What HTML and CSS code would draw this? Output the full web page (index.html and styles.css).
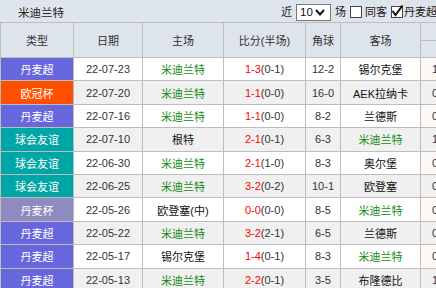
FILE: index.html
```html
<!DOCTYPE html>
<html lang="zh">
<head>
<meta charset="utf-8">
<link rel="stylesheet" href="styles.css">
</head>
<body>
<div class="page">
  <div class="titlebar">
    <div class="title">米迪兰特</div>
    <div class="controls">
      <span class="lbl">近</span>
      <span class="select"><span class="val">10</span><svg class="chev" width="10" height="7" viewBox="0 0 10 7"><polyline points="1,1 5,5.5 9,1" fill="none" stroke="#111" stroke-width="2"/></svg></span>
      <span class="lbl">场</span>
      <span class="cb"></span>
      <span class="lbl t1">同客</span>
      <span class="cb on"><svg width="13" height="13" viewBox="0 0 13 13"><polyline points="1.5,6 4.5,10 11.5,0.5" fill="none" stroke="#111" stroke-width="2"/></svg></span>
      <span class="lbl t2">丹麦超</span>
      <span class="cb on"><svg width="13" height="13" viewBox="0 0 13 13"><polyline points="1.5,6 4.5,10 11.5,0.5" fill="none" stroke="#111" stroke-width="2"/></svg></span>
    </div>
  </div>
  <table class="grid">
    <colgroup>
      <col class="c-type"><col class="c-date"><col class="c-home"><col class="c-score"><col class="c-corner"><col class="c-away"><col class="c-extra">
    </colgroup>
    <thead>
      <tr class="h1">
        <th rowspan="2">类型</th>
        <th rowspan="2">日期</th>
        <th rowspan="2">主场</th>
        <th rowspan="2">比分(半场)</th>
        <th rowspan="2">角球</th>
        <th rowspan="2">客场</th>
        <th class="ex"></th>
      </tr>
      <tr class="h2"><th class="ex"></th></tr>
    </thead>
    <tbody>
      <tr class="w"><td class="t dk">丹麦超</td><td>22-07-23</td><td class="g">米迪兰特</td><td><span class="r">1-3</span>(0-1)</td><td>12-2</td><td class="k">锡尔克堡</td><td class="ex">1</td></tr>
      <tr class="s"><td class="t uc">欧冠杯</td><td>22-07-20</td><td class="g">米迪兰特</td><td><span class="r">1-1</span>(0-0)</td><td>16-0</td><td class="k">AEK拉纳卡</td><td class="ex">0</td></tr>
      <tr class="w"><td class="t dk">丹麦超</td><td>22-07-16</td><td class="g">米迪兰特</td><td><span class="r">1-1</span>(0-0)</td><td>8-2</td><td class="k">兰德斯</td><td class="ex">0</td></tr>
      <tr class="s"><td class="t fr">球会友谊</td><td>22-07-10</td><td class="k">根特</td><td><span class="r">2-1</span>(0-1)</td><td>6-3</td><td class="g">米迪兰特</td><td class="ex">1</td></tr>
      <tr class="w"><td class="t fr">球会友谊</td><td>22-06-30</td><td class="g">米迪兰特</td><td><span class="r">2-1</span>(1-0)</td><td>8-3</td><td class="k">奥尔堡</td><td class="ex">0</td></tr>
      <tr class="s"><td class="t fr">球会友谊</td><td>22-06-25</td><td class="g">米迪兰特</td><td><span class="r">3-2</span>(0-2)</td><td>10-1</td><td class="k">欧登塞</td><td class="ex">0</td></tr>
      <tr class="w"><td class="t cup">丹麦杯</td><td>22-05-26</td><td class="k">欧登塞(中)</td><td><span class="r">0-0</span>(0-0)</td><td>8-5</td><td class="g">米迪兰特</td><td class="ex">0</td></tr>
      <tr class="s"><td class="t dk">丹麦超</td><td>22-05-22</td><td class="g">米迪兰特</td><td><span class="r">3-2</span>(2-1)</td><td>6-5</td><td class="k">兰德斯</td><td class="ex">0</td></tr>
      <tr class="w"><td class="t dk">丹麦超</td><td>22-05-17</td><td class="k">锡尔克堡</td><td><span class="r">1-4</span>(0-1)</td><td>8-3</td><td class="g">米迪兰特</td><td class="ex">0</td></tr>
      <tr class="s"><td class="t dk">丹麦超</td><td>22-05-13</td><td class="g">米迪兰特</td><td><span class="r">2-2</span>(0-1)</td><td>3-5</td><td class="k">布隆德比</td><td class="ex">1</td></tr>
    </tbody>
  </table>
</div>
</body>
</html>
```
FILE: styles.css
```css
html, body {
  margin: 0;
  padding: 0;
  background: #ffffff;
}
body {
  width: 436px;
  height: 288px;
  overflow: hidden;
  font-family: "Liberation Sans", "Noto Sans CJK SC", sans-serif;
  font-size: 11px;
  color: #333333;
}
.page {
  width: 436px;
  overflow: hidden;
}
.titlebar {
  display: flex;
  align-items: center;
  height: 22px;
  background: #dde4ec;
  white-space: nowrap;
}
.title {
  flex: 0 0 263px;
  padding-left: 18px;
  color: #222222;
  font-size: 11.5px;
  padding-top: 2px;
}
.controls {
  flex: none;
  display: flex;
  align-items: center;
  padding-top: 2px;
  color: #222222;
}
.lbl {
  line-height: 14px;
}
.select {
  display: flex;
  align-items: center;
  justify-content: space-between;
  box-sizing: border-box;
  width: 35px;
  height: 17px;
  margin: 0 4px 0 4px;
  padding: 0 5px 0 3px;
  border: 1px solid #777777;
  background: #ffffff;
  color: #111111;
}
.select .val {
  font-size: 11.5px;
}
.cb {
  position: relative;
  box-sizing: border-box;
  width: 12px;
  height: 12px;
  margin-left: 4px;
  border: 1px solid #444444;
  background: #ffffff;
}
.cb svg {
  position: absolute;
  left: -1px;
  top: -2px;
}
.t1 {
  margin-left: 3px;
}
.cb.on {
  margin-left: 4px;
}
.t2 {
  margin-left: 1px;
}
.grid {
  table-layout: fixed;
  width: 520px;
  border-collapse: collapse;
  border-left: 1px solid #bdbdbd;
}
.c-type { width: 73px; }
.c-date { width: 69px; }
.c-home { width: 81px; }
.c-score { width: 82px; }
.c-corner { width: 35px; }
.c-away { width: 80px; }
.c-extra { width: 100px; }
.grid th, .grid td {
  border: 1px solid #bdbdbd;
  padding: 0;
  text-align: center;
  vertical-align: middle;
  white-space: nowrap;
  overflow: hidden;
  font-weight: normal;
}
.grid th {
  background: #dde4ec;
  color: #333333;
}
.h1 { height: 18px; }
.h2 { height: 17px; }
.grid tbody tr { height: 23.4px; }
tr.w td { background: #ffffff; }
tr.s td { background: #f0f0f0; }
tr.w td.ex { background: #fdf8f3; }
.grid td.ex {
  text-align: left;
  padding-left: 11px;
}
.grid td.t { color: #ffffff; }
.grid td.dk { background: #6666dd; }
.grid td.uc { background: #ff5000; }
.grid td.fr { background: #00a6a6; }
.grid td.cup { background: #8d8bbf; }
.g { color: #118a11; }
.k { color: #111111; }
.r { color: #ff0000; }
```
